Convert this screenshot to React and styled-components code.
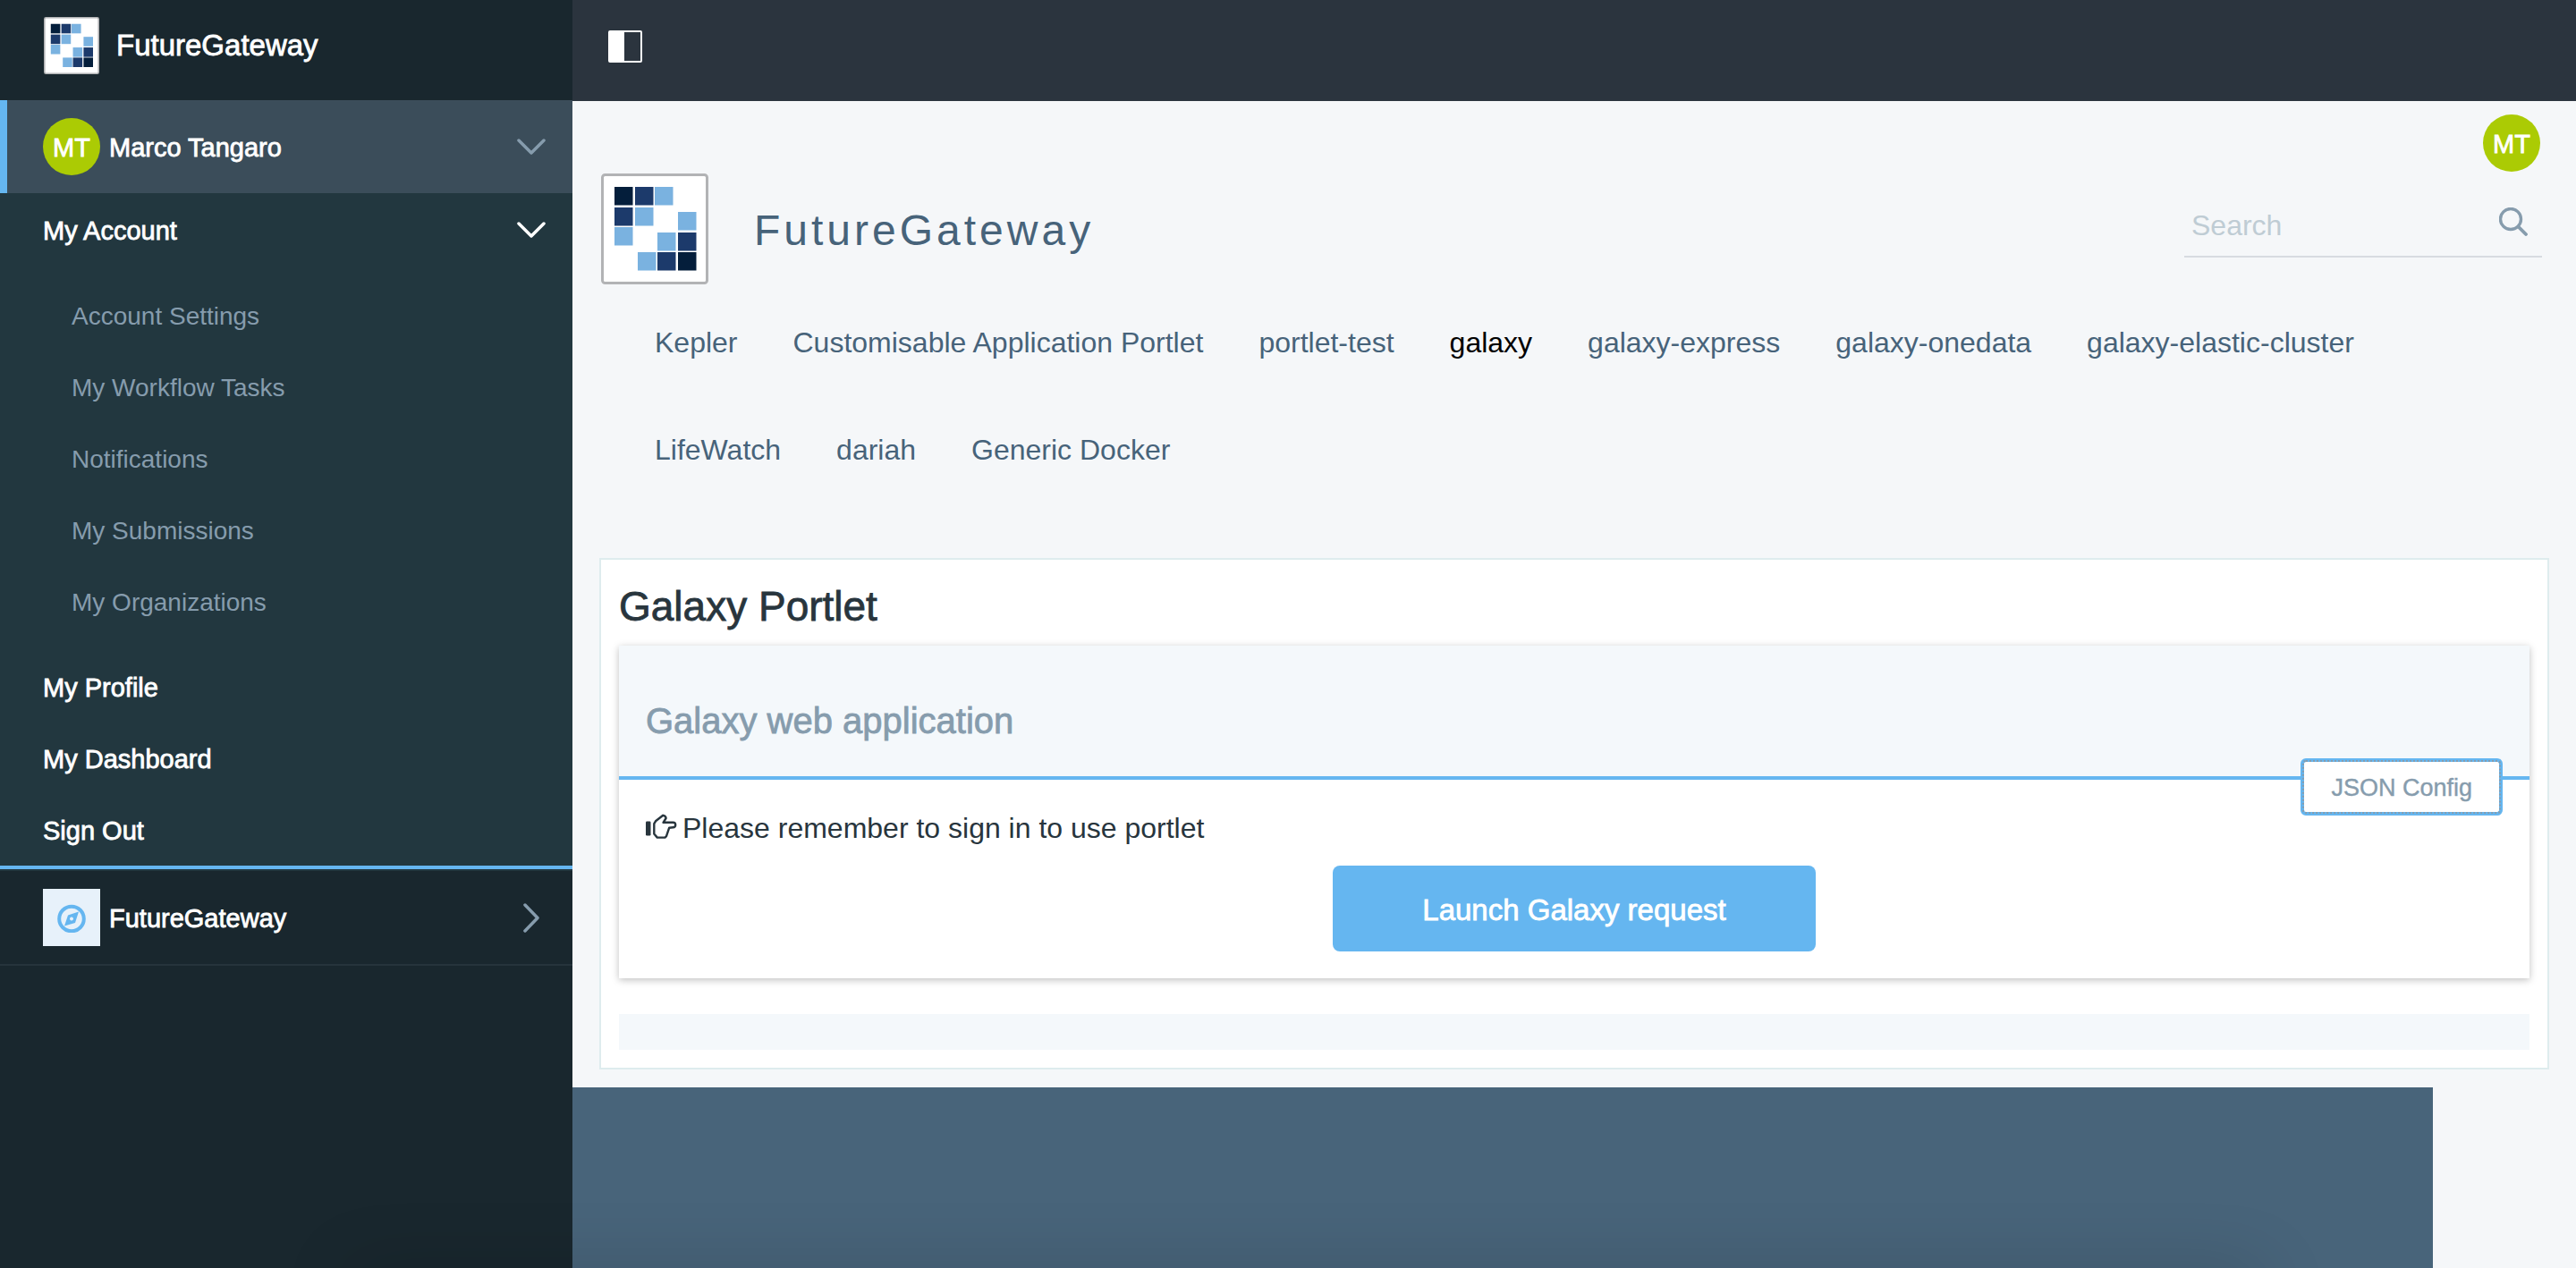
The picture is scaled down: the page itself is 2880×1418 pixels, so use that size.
import React, { useState } from "react";
import styled, { createGlobalStyle, css } from "styled-components";

const colors = {
  sidebar: "#19272e",
  sidebarOpen: "#22373f",
  userRow: "#3b4d5a",
  topbar: "#2b343e",
  page: "#f5f7f9",
  accent: "#65b6f0",
  slate: "#47637a",
  muted: "#869cad",
  ink: "#28353d",
  lime: "#abcb04",
  panel: "#f4f8fb",
};

const GlobalStyle = createGlobalStyle`
  *, *::before, *::after { box-sizing: border-box; }
  body {
    margin: 0;
    background: ${colors.page};
    color: ${colors.ink};
    font-family: "Liberation Sans", Arial, sans-serif;
    font-size: 32px;
  }
  h1, h2, h3, p, ul { margin: 0; padding: 0; font-weight: 400; }
  ul { list-style: none; }
  a { color: inherit; text-decoration: none; }
  button { font: inherit; cursor: pointer; }
`;

/* A weight between regular and bold. */
const medium = css`
  -webkit-text-stroke: 0.8px currentColor;
`;

const Shell = styled.div`
  display: flex;
  min-height: 100vh;
`;

const Sidebar = styled.aside`
  flex: 0 0 640px;
  background: ${colors.sidebar};
  color: #fff;
`;

const SidebarBrand = styled.a`
  display: flex;
  align-items: center;
  gap: 18px;
  height: 112px;
  padding: 0 48px 10px;
  font-size: 33px;
  ${medium}
`;

const sidebarRow = css`
  display: flex;
  align-items: center;
  width: 100%;
  padding: 2px 30px 0 48px;
  border: 0;
  background: none;
  color: #fff;
  font-size: 29px;
  text-align: left;
  ${medium}
`;

const UserToggle = styled.button`
  ${sidebarRow}
  gap: 10px;
  height: 104px;
  padding: 0 30px 0 40px;
  border-left: 8px solid ${colors.accent};
  background: ${colors.userRow};
`;

const Avatar = styled.span`
  display: flex;
  align-items: center;
  justify-content: center;
  width: 64px;
  height: 64px;
  padding-top: 2px;
  border-radius: 50%;
  background: ${colors.lime};
  color: #fff;
  font-size: 29px;
  ${medium}
`;

const RowLabel = styled.span`
  flex: 1;
  padding-top: 2px;
`;

const AccountMenu = styled.nav`
  background: ${colors.sidebarOpen};
  border-bottom: 4px solid ${colors.accent};
`;

const MenuToggle = styled.button`
  ${sidebarRow}
  height: 80px;
`;

const MenuLink = styled.a`
  ${sidebarRow}
  height: 80px;
`;

const SubMenu = styled.ul`
  padding: 16px 0;
`;

const SubLink = styled.a`
  display: flex;
  align-items: center;
  height: 80px;
  padding: 3px 80px 0;
  color: ${colors.muted};
  font-size: 28px;
`;

const SiteToggle = styled.button`
  ${sidebarRow}
  gap: 10px;
  height: 108px;
  padding: 0 30px 0 48px;
  border-top: 2px solid ${colors.sidebarOpen};
  border-bottom: 2px solid #26343c;
`;

const SiteBadge = styled.span`
  display: flex;
  align-items: center;
  justify-content: center;
  width: 64px;
  height: 64px;
  background: #e7f1fa;
`;

const Column = styled.div`
  display: flex;
  flex-direction: column;
  flex: 1;
  min-width: 0;
`;

const TopBar = styled.div`
  display: flex;
  align-items: center;
  height: 113px;
  padding: 0 40px 10px;
  background: ${colors.topbar};
`;

const IconButton = styled.button`
  display: flex;
  padding: 0;
  border: 0;
  background: none;
`;

const Page = styled.main`
  padding: 15px 30px 20px;
`;

const AccountBar = styled.div`
  display: flex;
  justify-content: flex-end;
  padding: 0 10px 2px;
`;

const BrandRow = styled.header`
  display: flex;
  align-items: center;
  padding: 0 8px 0 2px;
`;

const SiteTitle = styled.h1`
  flex: 1;
  padding: 2px 0 0 51px;
  color: ${colors.slate};
  font-size: 48px;
  letter-spacing: 4px;
`;

const SearchBox = styled.form`
  display: flex;
  align-items: center;
  width: 400px;
  height: 76px;
  padding: 0 16px 2px 8px;
  margin-bottom: 12px;
  border-bottom: 2px solid #d7dbe1;
`;

const SearchInput = styled.input`
  flex: 1;
  min-width: 0;
  height: 56px;
  padding: 8px 0 0;
  border: 0;
  outline: 0;
  background: none;
  color: ${colors.ink};
  font: inherit;
  &::placeholder {
    color: #bfccd4;
    opacity: 1;
  }
`;

const SiteNav = styled.ul`
  display: flex;
  flex-wrap: wrap;
  padding: 5px 0 0 31px;
`;

const SiteLink = styled.a`
  display: block;
  padding: 0 31px;
  line-height: 120px;
  color: ${({ $active }) => ($active ? "#000" : colors.slate)};
`;

const Card = styled.section`
  margin-top: 61px;
  padding: 20px;
  border: 2px solid #deecee;
  background: #fff;
`;

const CardTitle = styled.h2`
  padding-top: 2px;
  margin-bottom: 14px;
  font-size: 46px;
  line-height: 60px;
  ${medium}
`;

const Panel = styled.div`
  margin-bottom: 40px;
  box-shadow: 0 2px 8px rgba(0, 0, 0, 0.25);
`;

const PanelHead = styled.div`
  position: relative;
  padding: 60px 30px 38px;
  border-bottom: 4px solid ${colors.accent};
  background: ${colors.panel};
`;

const PanelTitle = styled.h3`
  color: ${colors.muted};
  font-size: 40px;
  line-height: 48px;
  ${medium}
`;

const ConfigButton = styled.button`
  position: absolute;
  right: 30px;
  bottom: -44px;
  height: 64px;
  padding: 2px 30px 0;
  border: 4px solid ${colors.accent};
  border-radius: 6px;
  outline: 2px dotted ${colors.muted};
  outline-offset: -4px;
  background: #fff;
  color: ${colors.muted};
  font-size: 27px;
  -webkit-text-stroke: 0.4px currentColor;
`;

const PanelBody = styled.div`
  display: flex;
  flex-direction: column;
  align-items: center;
  gap: 18px;
  padding: 30px;
`;

const Notice = styled.p`
  display: flex;
  align-items: center;
  align-self: stretch;
  gap: 5px;
  line-height: 48px;
`;

const LaunchButton = styled.button`
  width: 540px;
  height: 96px;
  padding-top: 4px;
  border: 0;
  border-radius: 8px;
  background: ${colors.accent};
  color: #fff;
  font-size: 33px;
  ${medium}
`;

const EmptyStrip = styled.div`
  height: 40px;
  background: ${colors.panel};
`;

const Footer = styled.footer`
  flex: 1;
  margin-right: 160px;
  background: #48647a;
`;

/* Soft shade rising from the bottom edge of the window. */
const BottomShade = styled.div`
  position: fixed;
  right: 360px;
  bottom: -34px;
  left: 400px;
  height: 20px;
  box-shadow: 0 0 80px 10px rgba(0, 0, 0, 0.2);
  pointer-events: none;
`;

const logoTiles = [
  [15, 15, "#041e3b"],
  [38, 15, "#1c3a6b"],
  [60, 15, "#7ab2e0"],
  [15, 38, "#1c3a6b"],
  [38, 38, "#7ab2e0"],
  [15, 60, "#7ab2e0"],
  [86, 43, "#7ab2e0"],
  [63, 66, "#7ab2e0"],
  [86, 66, "#1c3a6b"],
  [41, 88, "#7ab2e0"],
  [63, 88, "#1c3a6b"],
  [86, 88, "#041e3b"],
];

function Logo({ width, height }) {
  return (
    <svg width={width} height={height} viewBox="0 0 120 124" aria-hidden="true">
      <rect x="1.5" y="1.5" width="117" height="121" rx="3" fill="#fff" stroke="#b2b3b5" strokeWidth="3" />
      {logoTiles.map(([x, y, fill]) => (
        <rect key={`${x}-${y}`} x={x} y={y} width="20.5" height="20.5" fill={fill} />
      ))}
    </svg>
  );
}

function ChevronDown({ color }) {
  return (
    <svg width="32" height="20" viewBox="0 0 32 20" fill="none" aria-hidden="true">
      <path d="M2 3 L16 17 L30 3" stroke={color} strokeWidth="3.500" strokeLinecap="round" strokeLinejoin="round" />
    </svg>
  );
}

function ChevronRight() {
  return (
    <svg width="32" height="34" viewBox="0 0 32 34" fill="none" aria-hidden="true">
      <path d="M9 3 L23 17.500 L9 32" stroke={colors.muted} strokeWidth="3.500" strokeLinecap="round" strokeLinejoin="round" />
    </svg>
  );
}

function SidebarIcon() {
  return (
    <svg width="38" height="36" viewBox="0 0 38 36" aria-hidden="true">
      <rect x="1" y="1" width="36" height="34" rx="1" fill="none" stroke="#fff" strokeWidth="2" />
      <rect x="1" y="1" width="17" height="34" fill="#fff" />
    </svg>
  );
}

function CompassIcon() {
  return (
    <svg width="32" height="34" viewBox="0 0 32 34" aria-hidden="true">
      <circle cx="16" cy="18.500" r="13.800" fill="none" stroke={colors.accent} strokeWidth="4" />
      <path
        fill={colors.accent}
        fillRule="evenodd"
        d="M24 10.500 L20 23 L8 26.500 L12 14.500 Z M16 16.500 a2 2 0 1 0 0.010 0 Z"
      />
    </svg>
  );
}

function SearchIcon() {
  return (
    <svg width="32" height="32" viewBox="0 0 32 32" fill="none" stroke={colors.muted} aria-hidden="true">
      <circle cx="13" cy="13" r="11.500" strokeWidth="3.400" />
      <path d="M21.500 21.500 L30 30" strokeWidth="3.800" strokeLinecap="round" />
    </svg>
  );
}

function HandIcon() {
  return (
    <svg width="36" height="34" viewBox="0 0 36 34" aria-hidden="true">
      <rect x="0" y="9.500" width="5.500" height="16" rx="1.200" fill={colors.ink} />
      <path
        d="M9.300 23.500 V12.200 L11 9.300 L19.300 2.800 Q22.500 3.500 22.600 6 L19.500 10.800 H30.500 Q33.200 10.800 33.200 13.400 Q33.200 16 30.500 16.200 L26.200 16.700 L23 26.200 L21.500 27.600 H12.800 Z"
        fill="none"
        stroke={colors.ink}
        strokeWidth="2.400"
        strokeLinejoin="round"
      />
    </svg>
  );
}

const accountLinks = [
  "Account Settings",
  "My Workflow Tasks",
  "Notifications",
  "My Submissions",
  "My Organizations",
];

const personalLinks = ["My Profile", "My Dashboard", "Sign Out"];

const siteLinks = [
  "Kepler",
  "Customisable Application Portlet",
  "portlet-test",
  "galaxy",
  "galaxy-express",
  "galaxy-onedata",
  "galaxy-elastic-cluster",
  "LifeWatch",
  "dariah",
  "Generic Docker",
];

export default function App() {
  const [accountOpen, setAccountOpen] = useState(true);

  return (
    <>
      <GlobalStyle />
      <Shell>
        <Sidebar>
          <SidebarBrand href="#home">
            <Logo width={64} height={64} />
            FutureGateway
          </SidebarBrand>
          <UserToggle type="button">
            <Avatar>MT</Avatar>
            <RowLabel>Marco Tangaro</RowLabel>
            <ChevronDown color={colors.muted} />
          </UserToggle>
          <AccountMenu>
            <MenuToggle
              type="button"
              aria-expanded={accountOpen}
              onClick={() => setAccountOpen(!accountOpen)}
            >
              <RowLabel>My Account</RowLabel>
              <ChevronDown color="#fff" />
            </MenuToggle>
            {accountOpen && (
              <SubMenu>
                {accountLinks.map((label) => (
                  <li key={label}>
                    <SubLink href="#account">{label}</SubLink>
                  </li>
                ))}
              </SubMenu>
            )}
            <ul>
              {personalLinks.map((label) => (
                <li key={label}>
                  <MenuLink href="#personal">{label}</MenuLink>
                </li>
              ))}
            </ul>
          </AccountMenu>
          <SiteToggle type="button">
            <SiteBadge>
              <CompassIcon />
            </SiteBadge>
            <RowLabel>FutureGateway</RowLabel>
            <ChevronRight />
          </SiteToggle>
        </Sidebar>

        <Column>
          <TopBar>
            <IconButton type="button" aria-label="Toggle menu">
              <SidebarIcon />
            </IconButton>
          </TopBar>
          <Page>
            <AccountBar>
              <Avatar>MT</Avatar>
            </AccountBar>
            <BrandRow>
              <Logo width={120} height={124} />
              <SiteTitle>FutureGateway</SiteTitle>
              <SearchBox role="search" onSubmit={(event) => event.preventDefault()}>
                <SearchInput type="text" aria-label="Search" placeholder="Search" />
                <IconButton type="submit" aria-label="Submit search">
                  <SearchIcon />
                </IconButton>
              </SearchBox>
            </BrandRow>
            <nav>
              <SiteNav>
                {siteLinks.map((label) => (
                  <li key={label}>
                    <SiteLink href={`#${label}`} $active={label === "galaxy"}>
                      {label}
                    </SiteLink>
                  </li>
                ))}
              </SiteNav>
            </nav>
            <Card>
              <CardTitle>Galaxy Portlet</CardTitle>
              <Panel>
                <PanelHead>
                  <PanelTitle>Galaxy web application</PanelTitle>
                  <ConfigButton type="button">JSON Config</ConfigButton>
                </PanelHead>
                <PanelBody>
                  <Notice>
                    <HandIcon />
                    Please remember to sign in to use portlet
                  </Notice>
                  <LaunchButton type="button">Launch Galaxy request</LaunchButton>
                </PanelBody>
              </Panel>
              <EmptyStrip />
            </Card>
          </Page>
          <Footer />
        </Column>
      </Shell>
      <BottomShade />
    </>
  );
}
